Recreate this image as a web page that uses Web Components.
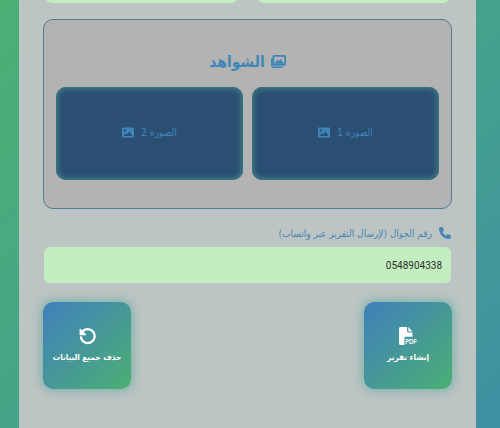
<!DOCTYPE html>
<html lang="ar" dir="rtl">
<head>
<meta charset="utf-8">
<style>
  html,body{margin:0;padding:0;height:428px;overflow:hidden}
  body{font-family:"DejaVu Sans Condensed","DejaVu Sans",sans-serif;font-stretch:condensed;background:linear-gradient(135deg,#4caf73 0%,#45a28c 55%,#3f8fa3 100%)}
</style>
</head>
<body>
<report-panel>
  <field-row></field-row>
  <evidence-box title-text="الشواهد">
    <photo-card label="الصورة 1"></photo-card>
    <photo-card label="الصورة 2"></photo-card>
  </evidence-box>
  <phone-field label="رقم الجوال (لإرسال التقرير عبر واتساب)" value="0548904338"></phone-field>
  <action-row>
    <action-btn label="إنشاء تقرير" icon="pdf"></action-btn>
    <action-btn label="حذف جميع البيانات" icon="undo"></action-btn>
  </action-row>
</report-panel>
<script>
const ICONS = {
  images: '<svg width="15" height="13" viewBox="0 0 16 14"><path fill="none" stroke="currentColor" stroke-width="2" d="M3.500 1h10.700c.5 0 1 .5 1 1v7.500c0 .5-.5 1-1 1H3.500c-.5 0-1-.5-1-1V2c0-.5.5-1 1-1z"/><path fill="currentColor" d="M3.800 9.400 7.200 4.600l1.600 2 1.400-2.600 3.800 5.400z"/><path fill="none" stroke="currentColor" stroke-width="1.800" d="M.9 3.500v8c0 .9.700 1.700 1.600 1.700h10.200"/></svg>',
  image: '<svg width="12" height="11" viewBox="0 0 13 11"><path fill="currentColor" fill-rule="evenodd" d="M1.200 0h10.600c.7 0 1.200.5 1.200 1.200v8.600c0 .7-.5 1.200-1.200 1.200H1.200C.5 11 0 10.500 0 9.800V1.200C0 .5.500 0 1.200 0zM3 2a1.300 1.300 0 1 0 0 2.600A1.300 1.300 0 0 0 3 2zM1.700 9.300h9.600L8.200 4.400 5.700 7.800 4.200 6.300z"/></svg>',
  phone: '<svg width="12" height="12" viewBox="0 0 512 512"><path fill="currentColor" d="M164.900 24.600c-7.700-18.600-28-28.500-47.400-23.200l-88 24C12.100 30.200 0 46 0 64c0 247.400 200.600 448 448 448 18 0 33.800-12.100 38.600-29.500l24-88c5.300-19.400-4.600-39.700-23.200-47.400l-96-40c-16.300-6.800-35.200-2.100-46.300 11.600L304.700 368C234.300 334.700 177.300 277.700 144 207.300l49.300-40.300c13.700-11.200 18.400-30 11.600-46.300l-40-96z"/></svg>',
  undo: '<svg width="17" height="17" viewBox="0 0 17 17"><path fill="none" stroke="currentColor" stroke-width="2.300" stroke-linecap="round" d="M3.300 3.900A6.900 6.900 0 1 1 2 9.500"/><path fill="currentColor" d="M.6 1.300c0-.5.600-.8 1-.4l5.400 5.300c.4.400.1 1-.4 1H1.300c-.4 0-.7-.3-.7-.7z"/></svg>',
  pdf: '<svg class="pdf" width="20" height="22" viewBox="0 0 20 22"><path fill="currentColor" d="M1.500 0h6.600v4.400c0 .7.500 1.200 1.200 1.200h4.200v4.200H7c-.9 0-1.600.7-1.600 1.600V18H1.500C.700 18 0 17.300 0 16.500V1.500C0 .700.700 0 1.500 0z"/><path fill="currentColor" d="M9.300 0l4.200 4.400H9.300z"/><text x="6.200" y="17.200" font-family="Liberation Sans" font-weight="700" font-size="7" textLength="11.500" lengthAdjust="spacingAndGlyphs" fill="currentColor" direction="ltr">PDF</text></svg>'
};

class ReportPanel extends HTMLElement {
  connectedCallback() {
    this.attachShadow({ mode: 'open' }).innerHTML = `
      <style>
        :host{display:flex;flex-direction:column;box-sizing:border-box;width:457px;height:470px;margin:-42px 24px 0 0;padding:0 24px 0 24px;background:#bcc5c3;color:#3f86b8}
      </style>
      <slot></slot>`;
  }
}
class FieldRow extends HTMLElement {
  connectedCallback() {
    this.attachShadow({ mode: 'open' }).innerHTML = `
      <style>
        :host{display:flex;gap:19px;height:45px;margin:0 2px 16px 2px;flex:none}
        div{flex:1;background:#c3efc0;border-radius:0 0 7px 7px}
      </style>
      <div></div><div></div>`;
  }
}
class EvidenceBox extends HTMLElement {
  connectedCallback() {
    this.attachShadow({ mode: 'open' }).innerHTML = `
      <style>
        :host{display:block;box-sizing:border-box;height:190px;flex:none;background:#b3b3b3;border:1px solid #4d7f98;border-radius:10px;padding:0 12px}
        h3{display:flex;justify-content:center;align-items:center;gap:6px;margin:0;height:67px;padding-top:16px;box-sizing:border-box;font-size:15.500px;font-weight:700;color:#3f86b8}
        .grid{display:grid;grid-template-columns:1fr 1fr;gap:9px}
        svg{display:block}
      </style>
      <h3>${ICONS.images}<span>${this.getAttribute('title-text')}</span></h3>
      <div class="grid"><slot></slot></div>`;
  }
}
class PhotoCard extends HTMLElement {
  connectedCallback() {
    this.attachShadow({ mode: 'open' }).innerHTML = `
      <style>
        :host{display:flex;align-items:center;justify-content:center;gap:7px;box-sizing:border-box;height:93px;padding-bottom:2px;background:#2b4f73;border-radius:10px;box-shadow:inset 0 0 5px 2px #3f7d84;color:#3f86b8;font-size:10px}
        svg{display:block}
      </style>
      <span>${this.getAttribute('label')}</span>${ICONS.image}`;
  }
}
class PhoneField extends HTMLElement {
  connectedCallback() {
    this.attachShadow({ mode: 'open' }).innerHTML = `
      <style>
        :host{display:block;flex:none;margin-top:16px;padding:0 1px}
        label{display:flex;align-items:center;gap:7px;height:16px;margin-bottom:6px;font-size:10px;color:#4585b3}
        svg{display:block}
        .input{box-sizing:border-box;height:36px;display:flex;align-items:center;padding:0 9px;background:#c3efc0;border-radius:6px;color:#2a2f2e;font:10px Roboto,sans-serif;direction:rtl}
      </style>
      <label>${ICONS.phone}<span>${this.getAttribute('label')}</span></label>
      <div class="input">${this.getAttribute('value')}</div>`;
  }
}
class ActionRow extends HTMLElement {
  connectedCallback() {
    this.attachShadow({ mode: 'open' }).innerHTML = `
      <style>
        :host{display:flex;justify-content:space-between;flex:none;margin-top:19px}
      </style>
      <slot></slot>`;
  }
}
class ActionBtn extends HTMLElement {
  connectedCallback() {
    this.attachShadow({ mode: 'open' }).innerHTML = `
      <style>
        :host{display:flex;flex-direction:column;align-items:center;justify-content:center;gap:7px;box-sizing:border-box;width:88px;height:87px;padding-bottom:2px;border-radius:10px;background:linear-gradient(135deg,#3f80bd,#4caf73);box-shadow:0 0 8px 2px rgba(65,160,150,.5);color:#fff;font-size:8.200px;font-weight:700}
        svg{display:block}
        svg.pdf{margin:0 -2px -4px 0}
        span{white-space:nowrap}
      </style>
      ${ICONS[this.getAttribute('icon')]}<span>${this.getAttribute('label')}</span>`;
  }
}
customElements.define('report-panel', ReportPanel);
customElements.define('field-row', FieldRow);
customElements.define('evidence-box', EvidenceBox);
customElements.define('photo-card', PhotoCard);
customElements.define('phone-field', PhoneField);
customElements.define('action-row', ActionRow);
customElements.define('action-btn', ActionBtn);
</script>
</body>
</html>
